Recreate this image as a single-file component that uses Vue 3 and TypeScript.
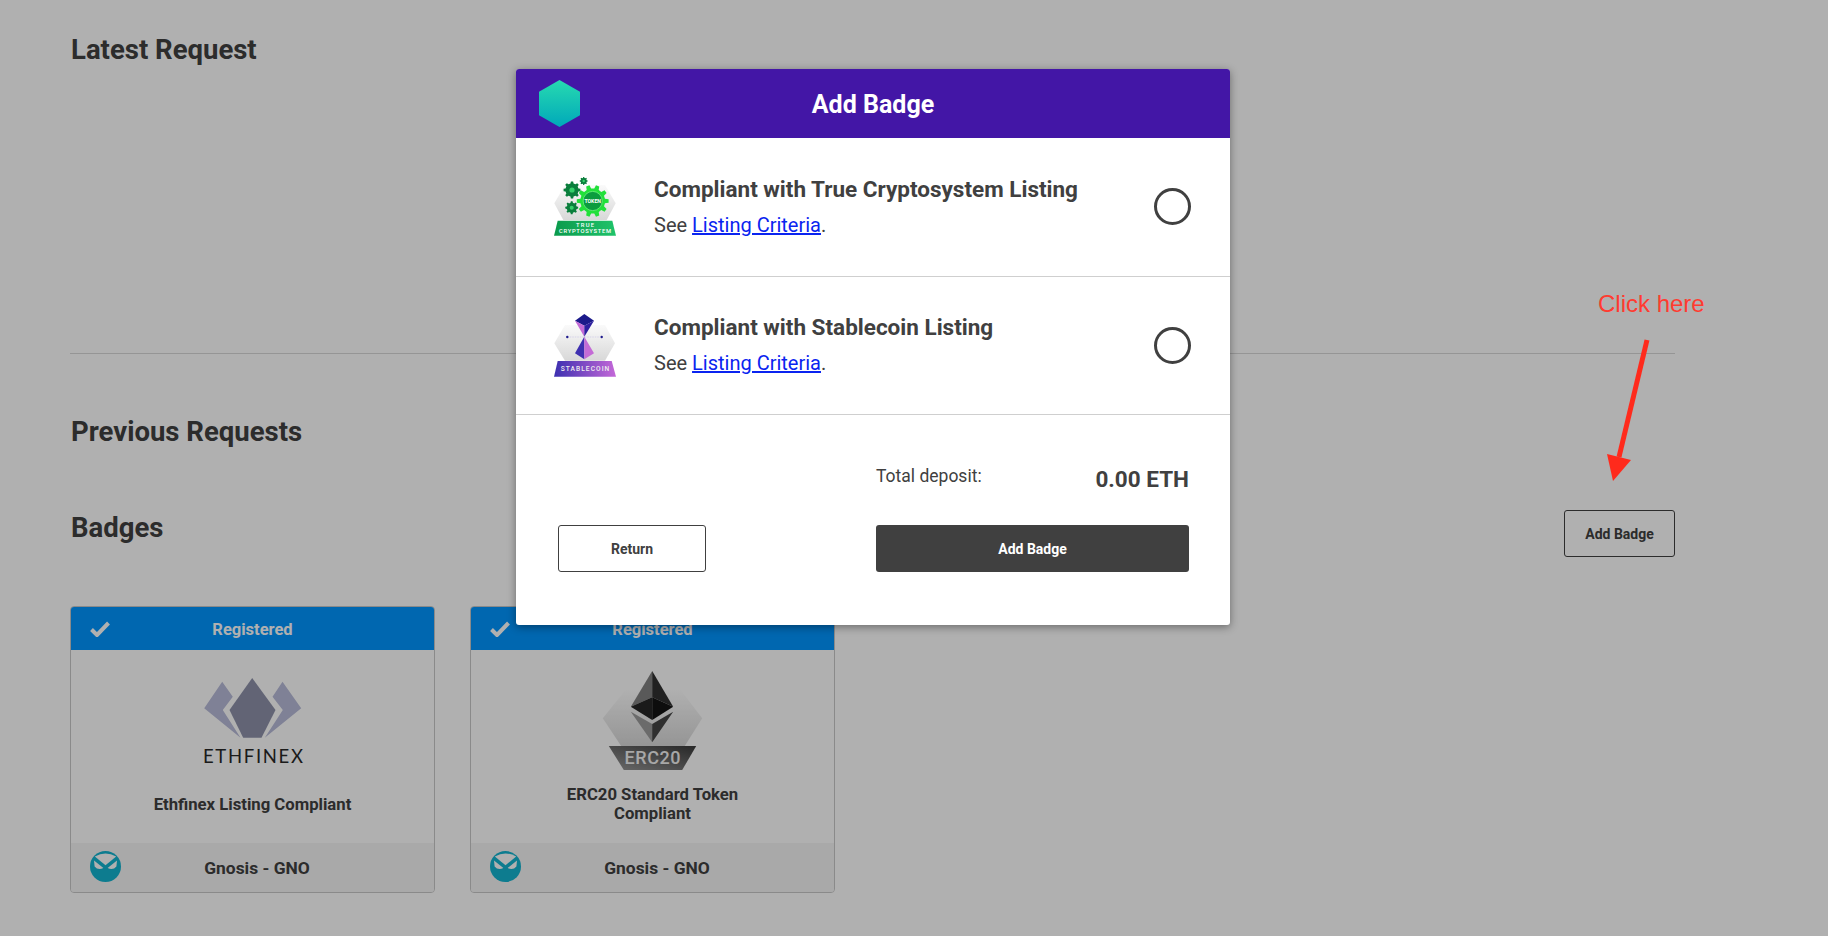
<script setup lang="ts">
interface Listing { id: string; title: string }
interface Badge { id: string; lines: string[] }

const listings: Listing[] = [
  { id: 'crypto', title: 'Compliant with True Cryptosystem Listing' },
  { id: 'stable', title: 'Compliant with Stablecoin Listing' },
]
const badges: Badge[] = [
  { id: 'ethfinex', lines: ['Ethfinex Listing Compliant'] },
  { id: 'erc20', lines: ['ERC20 Standard Token', 'Compliant'] },
]

function gear(cx: number, cy: number, r: number, teeth: number): string {
  const pts: string[] = []
  const step = (Math.PI * 2) / teeth
  const inner = r * 0.78
  for (let i = 0; i < teeth; i++) {
    const a = i * step
    const seq: [number, number][] = [
      [a - step * 0.3, inner],
      [a - step * 0.17, r],
      [a + step * 0.17, r],
      [a + step * 0.3, inner],
    ]
    for (const [t, rad] of seq) {
      pts.push(`${(cx + Math.cos(t) * rad).toFixed(2)} ${(cy + Math.sin(t) * rad).toFixed(2)}`)
    }
  }
  return 'M' + pts.join('L') + 'Z'
}
</script>

<template>
  <div class="page">
    <section class="latest">
      <h2 class="heading">Latest Request</h2>
    </section>
    <h2 class="heading previous">Previous Requests</h2>
    <div class="badges-bar">
      <h2 class="heading">Badges</h2>
      <button class="outline-btn">Add Badge</button>
    </div>
    <div class="cards">
      <article v-for="b in badges" :key="b.id" class="card">
        <header class="card-head">
          <svg class="check" viewBox="0 0 20 16" width="20" height="16">
            <path d="M1.5 8.5 L7 14 L18.5 2" fill="none" stroke="#fff" stroke-width="4" />
          </svg>
          <span>Registered</span>
        </header>
        <div class="card-body">
          <svg v-if="b.id === 'ethfinex'" class="card-logo" viewBox="0 0 120 122" width="120" height="122">
            <polygon points="59.2,18 82.5,50 68.5,77.7 50.2,77.7 36.5,50" fill="#8e92aa" />
            <polygon points="29.2,21.7 39.8,36.7 29.8,50 47.5,77.7 11.2,48.3" fill="#b9bcd9" />
            <polygon points="89.5,21.7 108.2,48.3 71.8,77.7 89.8,50 79.5,36.7" fill="#b9bcd9" />
            <text x="60" y="102.6" text-anchor="middle" textLength="100" class="eth-word">ETHFINEX</text>
          </svg>
          <svg v-else class="card-logo" viewBox="0 0 120 122" width="120" height="122">
            <defs>
              <linearGradient id="ercHex" x1="0" y1="0" x2="0" y2="1">
                <stop offset="0" stop-color="#ffffff" />
                <stop offset="1" stop-color="#d6d6d6" />
              </linearGradient>
              <linearGradient id="ercBand" x1="0" y1="1" x2="1" y2="0">
                <stop offset="0" stop-color="#9a9a9a" />
                <stop offset="1" stop-color="#3a3a3a" />
              </linearGradient>
            </defs>
            <polygon points="9.8,58.3 32.5,30 87.5,30 109.2,58.3 89.2,90 30.8,90" fill="url(#ercHex)" />
            <polygon points="59.2,11 37.8,46.7 59.2,37.3" fill="#828282" />
            <polygon points="59.2,11 80.2,46.7 59.2,37.3" fill="#313131" />
            <polygon points="37.8,46.7 59.2,37.3 59.2,60" fill="#262626" />
            <polygon points="80.2,46.7 59.2,37.3 59.2,60" fill="#141414" />
            <polygon points="37.8,51.7 59.2,64 59.2,82.3" fill="#9b9b9b" />
            <polygon points="80.2,51.7 59.2,64 59.2,82.3" fill="#444444" />
            <polygon points="15.8,86 103.2,86 89.2,110 30.8,110" fill="url(#ercBand)" />
            <text x="59.5" y="104" text-anchor="middle" textLength="56" class="erc-word">ERC20</text>
          </svg>
          <div class="card-label">
            <span v-for="l in b.lines" :key="l">{{ l }}</span>
          </div>
        </div>
        <footer class="card-foot">
          <svg class="owl" viewBox="0 0 31 31" width="31" height="31">
            <circle cx="15.5" cy="15.5" r="15.5" fill="#14b4d0" />
            <path d="M4.8 5.6 Q15.5 -0.8 26.2 5.6 L15.5 14.2 Z" fill="#fff" />
            <path d="M3.4 8.6 L13.2 16.4 L15.5 18.6 L17.8 16.4 L27.6 8.6" fill="none" stroke="#14b4d0" stroke-width="0.4" />
            <path d="M4 9.4 L13.4 17 Q8 19.6 4.6 15.4 Z" fill="#fff" />
            <path d="M27 9.4 L17.6 17 Q23 19.6 26.4 15.4 Z" fill="#fff" />
          </svg>
          <span>Gnosis - GNO</span>
        </footer>
      </article>
    </div>

    <div class="overlay">
      <div class="modal">
        <header class="modal-head">
          <svg class="hex" viewBox="0 0 41 47" width="41" height="47">
            <defs>
              <linearGradient id="hexFill" x1="0" y1="0" x2="0" y2="1">
                <stop offset="0" stop-color="#27dab0" />
                <stop offset="1" stop-color="#00a8ba" />
              </linearGradient>
            </defs>
            <polygon points="20.5,0 41,11.7 41,35.3 20.5,47 0,35.3 0,11.7" fill="url(#hexFill)" />
          </svg>
          <h1>Add Badge</h1>
        </header>

        <div v-for="item in listings" :key="item.id" class="listing">
          <svg v-if="item.id === 'crypto'" class="listing-logo" viewBox="0 0 66 64" width="66" height="64">
            <defs>
              <linearGradient id="lgHex" x1="0" y1="0" x2="0" y2="1">
                <stop offset="0" stop-color="#fafafa" />
                <stop offset="1" stop-color="#d8d8d8" />
              </linearGradient>
              <linearGradient id="lgBandG" x1="0" y1="0" x2="1" y2="0">
                <stop offset="0" stop-color="#0a9a4c" />
                <stop offset="1" stop-color="#1fc36a" />
              </linearGradient>
            </defs>
            <polygon points="2.3,28.3 13,10 53,10 63.7,28.3 54.7,45 11.3,45" fill="url(#lgHex)" />
            <polygon points="5.7,45.7 60.3,45.7 64,60.7 2,60.7" fill="url(#lgBandG)" />
            <path :d="gear(40.7, 26, 16, 10)" fill="#22e03a" />
            <circle cx="40.7" cy="26" r="9.6" fill="#0b9c3e" stroke="#6df07f" stroke-width="0.8" />
            <path :d="gear(20, 15, 8.5, 8)" fill="#0a7e3c" />
            <circle cx="20" cy="15" r="2.6" fill="#35d06a" />
            <path :d="gear(19.7, 32.7, 6.5, 8)" fill="#0a7e3c" />
            <circle cx="19.7" cy="32.7" r="2" fill="#35d06a" />
            <path :d="gear(31.7, 6, 4, 8)" fill="#0a7e3c" />
            <circle cx="31.7" cy="6" r="1.2" fill="#35d06a" />
            <text x="40.7" y="28" text-anchor="middle" class="logo-tiny">TOKEN</text>
            <text x="33" y="51.6" text-anchor="middle" textLength="18" class="logo-band">TRUE</text>
            <text x="33" y="57.8" text-anchor="middle" textLength="52" class="logo-band">CRYPTOSYSTEM</text>
          </svg>
          <svg v-else class="listing-logo" viewBox="0 0 66 64" width="66" height="64">
            <defs>
              <linearGradient id="lgHex2" x1="0" y1="0" x2="0" y2="1">
                <stop offset="0" stop-color="#fafafa" />
                <stop offset="1" stop-color="#d8d8d8" />
              </linearGradient>
              <linearGradient id="lgBandP" x1="0" y1="0" x2="1" y2="0">
                <stop offset="0" stop-color="#3c30b0" />
                <stop offset="1" stop-color="#c468d8" />
              </linearGradient>
            </defs>
            <polygon points="2.3,30.3 13,12 53,12 63,30.3 53,47.7 13,47.7" fill="url(#lgHex2)" />
            <polygon points="5.7,48 59.7,48 64,63.7 2,63.7" fill="url(#lgBandP)" />
            <line x1="15.3" y1="24" x2="49.7" y2="24" stroke="#cfcbe8" stroke-width="0.8" stroke-dasharray="1.5 1" />
            <circle cx="15.3" cy="24" r="1.2" fill="#1e1a8c" />
            <circle cx="49.7" cy="24" r="1.2" fill="#1e1a8c" />
            <polygon points="32.3,1 42,7.7 32.3,12.7 23,7.7" fill="#1b1a8a" />
            <polygon points="23,7.7 32.3,12.7 32.3,23.7" fill="#c46bd6" />
            <polygon points="42,7.7 32.3,12.7 32.3,23.7" fill="#2d1f9f" />
            <polygon points="32.3,23.7 23,40.3 32.3,46.3" fill="#3e2fb0" />
            <polygon points="32.3,23.7 42,40.3 32.3,46.3" fill="#c46bd6" />
            <text x="33" y="58.4" text-anchor="middle" textLength="48.6" class="logo-stable">STABLECOIN</text>
          </svg>
          <div class="listing-text">
            <h3>{{ item.title }}</h3>
            <p>See <a href="#">Listing Criteria</a>.</p>
          </div>
          <span class="radio"></span>
        </div>

        <div class="modal-foot">
          <span class="total-label">Total deposit:</span>
          <span class="total-value">0.00 ETH</span>
          <button class="return-btn">Return</button>
          <button class="submit-btn">Add Badge</button>
        </div>
      </div>
    </div>

    <div class="note">Click here</div>
    <svg class="note-arrow" viewBox="0 0 46 150" width="46" height="150">
      <line x1="43" y1="4" x2="15" y2="121" stroke="#ff2a1c" stroke-width="5" />
      <polygon points="3,118 27,124 9,145" fill="#ff2a1c" />
    </svg>
  </div>
</template>

<style>
html, body { margin: 0; background: #fff; overflow: hidden; }
</style>

<style scoped>
.page {
  position: relative;
  box-sizing: border-box;
  width: 1828px;
  height: 936px;
  overflow: hidden;
  padding: 35px 153px 0 70px;
  font-family: Roboto, "Liberation Sans", sans-serif;
  color: #404040;
  background: #fff;
}
.heading {
  margin: 0 0 0 1px;
  font-size: 27.5px;
  line-height: 30px;
  font-weight: 700;
  color: #404040;
}
.latest {
  height: 319px;
  box-sizing: border-box;
  border-bottom: 1px solid #d8d8d8;
}
.previous { margin-top: 63px; }
.badges-bar {
  display: flex;
  justify-content: space-between;
  align-items: flex-start;
  margin-top: 63px;
}
.badges-bar .heading { margin-top: 3px; }
.outline-btn {
  width: 111px;
  height: 47px;
  background: transparent;
  border: 1px solid #404040;
  border-radius: 3px;
  font: 700 14px Roboto, sans-serif;
  color: #404040;
  padding: 0;
}
.cards {
  display: flex;
  gap: 35px;
  margin-top: 49px;
}
.card {
  box-sizing: border-box;
  width: 365px;
  height: 287px;
  border: 1px solid #c8c8c8;
  border-radius: 4px;
  overflow: hidden;
  display: flex;
  flex-direction: column;
}
.card-head {
  position: relative;
  box-sizing: border-box;
  height: 43px;
  padding-top: 2px;
  flex: none;
  background: #0096ff;
  color: #fff;
  font-weight: 700;
  font-size: 16.5px;
  display: flex;
  align-items: center;
  justify-content: center;
}
.check { position: absolute; left: 19px; top: 14px; }
.card-body {
  flex: 1;
  display: flex;
  flex-direction: column;
  align-items: center;
  padding-top: 10px;
}
.card-logo { display: block; flex: none; }
.card-label {
  height: 46px;
  margin-top: -1px;
  display: flex;
  flex-direction: column;
  justify-content: center;
  align-items: center;
  font-size: 16.7px;
  line-height: 19px;
  font-weight: 700;
}
.card-foot {
  position: relative;
  height: 49px;
  flex: none;
  background: #f5f5f5;
  display: flex;
  align-items: center;
  justify-content: center;
  padding-left: 9px;
  font-size: 17.4px;
  font-weight: 700;
}
.owl { position: absolute; left: 19px; top: 8px; }
.eth-word {
  font-family: Lato, sans-serif;
  font-size: 18.5px;
  fill: #282828;
}
.erc-word {
  font-family: Roboto, sans-serif;
  font-weight: 500;
  font-size: 18px;
  fill: #f2f2f2;
}
.logo-tiny { font: 700 5.2px Roboto, sans-serif; fill: #fff; }
.logo-band { font: 500 5.8px Roboto, sans-serif; fill: #fff; }
.logo-stable { font: 500 6.6px Roboto, sans-serif; fill: #eee; }

.overlay {
  position: absolute;
  inset: 0;
  background: rgba(0, 0, 0, 0.31);
}
.modal {
  position: absolute;
  left: 516px;
  top: 69px;
  width: 714px;
  height: 556px;
  background: #fff;
  border-radius: 3px;
  box-shadow: 0 2px 8px rgba(0, 0, 0, 0.4);
  overflow: hidden;
}
.modal-head {
  height: 69px;
  background: #4316a6;
  display: grid;
  grid-template-columns: 1fr auto 1fr;
  align-items: center;
  padding-left: 23px;
  padding-right: 23px;
}
.modal-head h1 {
  margin: 1px 0 0;
  color: #fff;
  font-size: 25px;
  font-weight: 700;
}
.hex { display: block; }
.listing {
  box-sizing: border-box;
  height: 138.5px;
  border-bottom: 1px solid #cfcfcf;
  display: flex;
  align-items: center;
  padding: 0 39px 0 36px;
}
.listing-logo { flex: none; display: block; }
.listing-text { margin-left: 36px; flex: 1; }
.listing-text h3 {
  margin: 0;
  font-size: 22.5px;
  line-height: 26px;
  font-weight: 700;
  color: #404040;
}
.listing-text p {
  margin: 10px 0 0;
  font-size: 20px;
  line-height: 26px;
  color: #404040;
}
.listing-text a { color: #0a24f0; }
.radio {
  box-sizing: border-box;
  width: 37px;
  height: 37px;
  border: 3px solid #404040;
  border-radius: 50%;
  flex: none;
}
.modal-foot {
  display: grid;
  grid-template-columns: 148px 313px;
  column-gap: 170px;
  padding: 47px 0 0 42px;
  grid-template-rows: 36px 47px;
  row-gap: 27px;
}
.total-label {
  grid-column: 2;
  grid-row: 1;
  font-size: 17.5px;
  line-height: 28px;
  color: #404040;
}
.total-value {
  grid-column: 2;
  grid-row: 1;
  justify-self: end;
  font-size: 22.5px;
  font-weight: 700;
  line-height: 34px;
  color: #404040;
}
.return-btn, .submit-btn {
  grid-row: 2;
  border-radius: 3px;
  font: 700 14px Roboto, sans-serif;
  padding: 0;
}
.return-btn {
  grid-column: 1;
  background: #fff;
  border: 1px solid #404040;
  color: #404040;
}
.submit-btn {
  grid-column: 2;
  background: #404040;
  border: 0;
  color: #fff;
}
.note {
  position: absolute;
  left: 1598px;
  top: 290px;
  font: 24px/28px "Liberation Sans", Arial, sans-serif;
  color: #ff3b30;
}
.note-arrow {
  position: absolute;
  left: 1604px;
  top: 336px;
}
</style>
